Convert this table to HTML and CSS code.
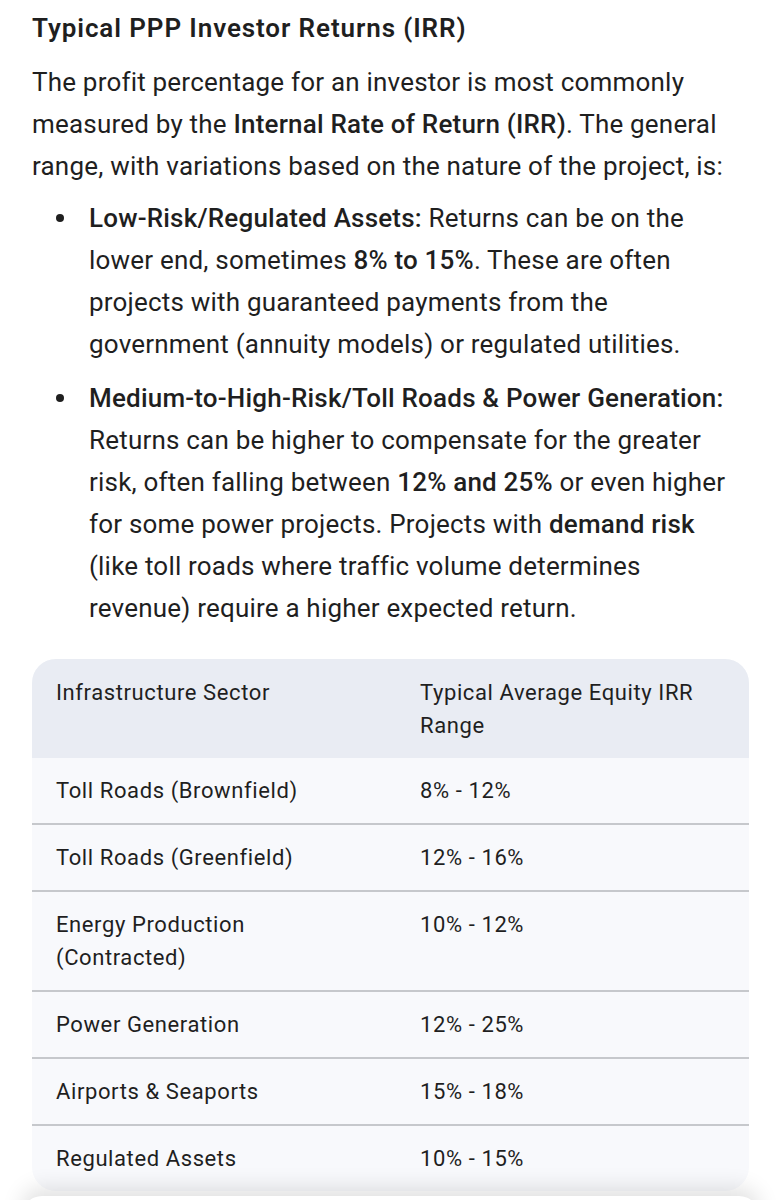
FILE: index.html
```html
<!DOCTYPE html>
<html lang="en">

<head>
    <meta charset="UTF-8">
    <meta name="viewport" content="width=device-width, initial-scale=1.0">
    <title>Typical PPP Investor Returns</title>
    <link rel="stylesheet" href="styles.css">
</head>

<body>
    <div class="answer">
        <h3 class="title">Typical PPP Investor Returns (IRR)</h3>
        <p class="text">
            The profit percentage for an investor is most commonly measured by the
            <b>Internal Rate of Return (IRR)</b>. The general range, with variations based on the nature of the project, is:
        </p>
        <ul class="points">
            <li>
                <b>Low-Risk/Regulated Assets:</b> Returns can be on the lower end, sometimes <b>8% to 15%</b>.
                These are often projects with guaranteed payments from the government (annuity models) or regulated utilities.
            </li>
            <li>
                <b>Medium-to-High-Risk/Toll Roads &amp; Power Generation:</b> Returns can be higher to compensate
                for the greater risk, often falling between <b>12% and 25%</b> or even higher for some power projects.
                Projects with <b>demand risk</b> (like toll roads where traffic volume determines revenue) require a
                higher expected return.
            </li>
        </ul>

        <div class="table-wrap">
            <table class="irr">
                <thead>
                    <tr>
                        <th>Infrastructure Sector</th>
                        <th>Typical Average Equity IRR Range</th>
                    </tr>
                </thead>
                <tbody>
                    <tr><td>Toll Roads (Brownfield)</td><td>8% - 12%</td></tr>
                    <tr><td>Toll Roads (Greenfield)</td><td>12% - 16%</td></tr>
                    <tr><td>Energy Production (Contracted)</td><td>10% - 12%</td></tr>
                    <tr><td>Power Generation</td><td>12% - 25%</td></tr>
                    <tr><td>Airports &amp; Seaports</td><td>15% - 18%</td></tr>
                    <tr><td>Regulated Assets</td><td>10% - 15%</td></tr>
                </tbody>
            </table>
        </div>
    </div>
    <div class="composer"></div>
</body>

</html>
```

FILE: styles.css
```css
body {
    margin: 0;
    background: #fff;
    color: #1f1f1f;
    font-family: Roboto, "Noto Sans", sans-serif;
    overflow: hidden;
    height: 1200px;
    position: relative;
}

b {
    font-weight: 500;
}

.answer {
    padding: 13px 26px 0 32px;
}

.title {
    margin: 0;
    font-size: 26px;
    font-weight: 600;
    letter-spacing: 0.9px;
    line-height: 30px;
}

.text {
    margin: 18px 0 0 0;
    font-size: 26px;
    letter-spacing: 0.2px;
    line-height: 42px;
}

.points {
    margin: 10px 0 0 0;
    padding: 0 17px 0 57px;
    list-style: none;
    font-size: 26px;
    letter-spacing: 0.2px;
    line-height: 42px;
}

.points li {
    position: relative;
    margin-bottom: 12px;
}

/* bullet dot sits 30px left of the text */
.points li::before {
    content: "";
    position: absolute;
    left: -33px;
    top: 17px;
    width: 8px;
    height: 8px;
    border-radius: 50%;
    background: #1f1f1f;
}

.table-wrap {
    margin-top: 30px;
    width: 717px;
    border-radius: 24px;
    overflow: hidden;
    background: #f8f9fc;
}

.irr {
    width: 100%;
    table-layout: fixed;
    border-collapse: collapse;
    font-size: 22px;
    letter-spacing: 0.6px;
    line-height: 33px;
}

.irr th {
    background: #e9ecf3;
    font-weight: 400;
    text-align: left;
    vertical-align: top;
    padding: 17px 24px 16px 24px;
}

.irr th:first-child {
    width: 316px;
}

.irr td {
    padding: 16px 24px 16px 24px;
    vertical-align: top;
    border-top: 2px solid #c6c8cc;
}

.irr tbody tr:first-child td {
    border-top: none;
}

.composer {
    position: absolute;
    left: 22px;
    right: 22px;
    top: 1196px;
    height: 40px;
    background: #fff;
    border-radius: 24px;
    box-shadow: 0 -8px 22px rgba(0, 0, 0, 0.12);
}
```
